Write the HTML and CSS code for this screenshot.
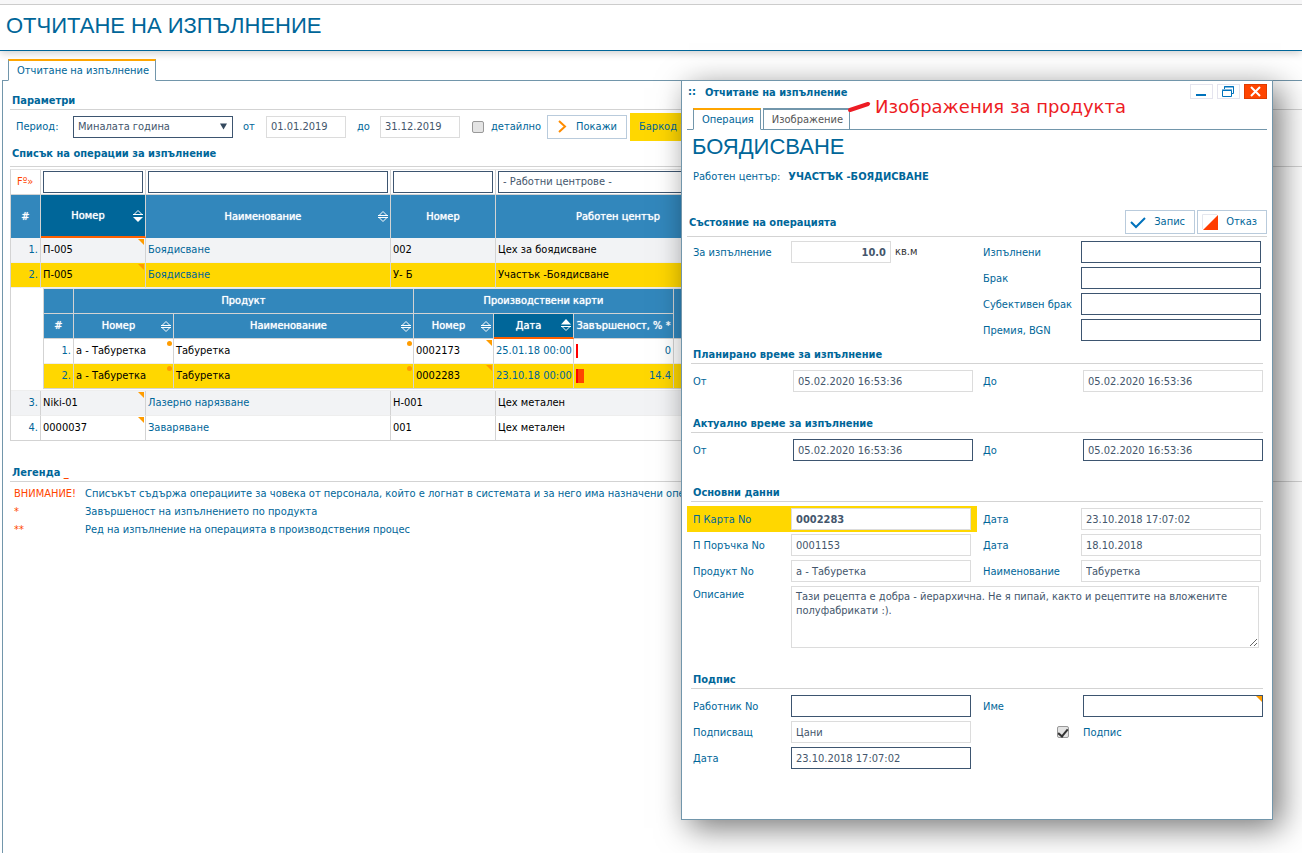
FILE: index.html
```html
<!DOCTYPE html>
<html lang="bg">
<head>
<meta charset="utf-8">
<title>Отчитане на изпълнение</title>
<link rel="stylesheet" href="styles.css">
</head>
<body>
<svg class="defs" aria-hidden="true">
  <symbol id="sort-none" viewBox="0 0 10 13"><path d="M1 5.5 5 1.5 9 5.5M0 5.5H10M0 7.5H10M1 7.5 5 11.5 9 7.5" fill="none" stroke="#fff"/></symbol>
  <symbol id="sort-down" viewBox="0 0 10 13"><path d="M1 5.5 5 1.5 9 5.5M0 5.5H10" fill="none" stroke="#fff"/><path d="M0 8H10L5 13Z" fill="#fff"/></symbol>
  <symbol id="sort-up" viewBox="0 0 10 13"><path d="M0 5.5H10L5 0Z" fill="#fff"/><path d="M0 7.5H10M1 7.5 5 11.5 9 7.5" fill="none" stroke="#fff"/></symbol>
</svg>

<header class="page-head"><h1>ОТЧИТАНЕ НА ИЗПЪЛНЕНИЕ</h1></header>

<main class="page">
  <nav class="tabs"><button class="tab active" type="button">Отчитане на изпълнение</button></nav>
  <div class="panel">
    <h2 class="section-title">Параметри</h2>
    <form class="params">
      <label class="p-label" for="period">Период:</label>
      <span class="select-wrap period-wrap">
        <select id="period" class="field"><option>Миналата година</option></select>
        <svg class="arrow" viewBox="0 0 8 6"><path d="M0 0H7L3.500 6Z" fill="#34495e"/></svg>
      </span>
      <label class="p-from" for="from">от</label>
      <input id="from" class="field ro date" value="01.01.2019" readonly>
      <label class="p-to" for="to">до</label>
      <input id="to" class="field ro date" value="31.12.2019" readonly>
      <label class="check-label"><input type="checkbox" class="check">детайлно</label>
      <button type="button" class="btn show"><svg width="9" height="13" viewBox="0 0 9 13"><path d="M1 1 7 6.500 1 12" fill="none" stroke="#ff8c00" stroke-width="2"/></svg>Покажи</button>
      <label class="barcode">Баркод на</label>
    </form>

    <h2 class="section-title list-title">Списък на операции за изпълнение</h2>
    <table class="grid">
      <colgroup><col class="c30"><col class="c105"><col class="c245"><col class="c105"><col class="c245"></colgroup>
      <thead>
        <tr class="filters">
          <td><a class="fx" href="#">Fº»</a></td>
          <td><input class="field" aria-label="Номер"></td>
          <td><input class="field" aria-label="Наименование"></td>
          <td><input class="field" aria-label="Номер на център"></td>
          <td><select class="field" aria-label="Работен център"><option>- Работни центрове -</option></select></td>
        </tr>
        <tr class="heads">
          <th>#</th>
          <th class="sorted"><div class="th"><span>Номер</span><svg class="sort"><use href="#sort-down"/></svg></div></th>
          <th><div class="th"><span>Наименование</span><svg class="sort"><use href="#sort-none"/></svg></div></th>
          <th>Номер</th>
          <th>Работен център</th>
        </tr>
      </thead>
      <tbody>
        <tr class="odd"><td class="num">1.</td><td class="tri">П-005</td><td><a href="#">Боядисване</a></td><td>002</td><td>Цех за боядисване</td></tr>
        <tr class="sel"><td class="num">2.</td><td class="tri">П-005</td><td><a href="#">Боядисване</a></td><td>У- Б</td><td>Участък -Боядисване</td></tr>
        <tr class="nest"><td colspan="5">
          <table class="grid inner">
            <colgroup><col class="c30"><col class="c100"><col class="c240"><col class="c80"><col class="c80"><col class="c100"><col class="c60"></colgroup>
            <thead>
              <tr><th></th><th colspan="2">Продукт</th><th colspan="3">Производствени карти</th><th rowspan="2">изп. **</th></tr>
              <tr><th>#</th>
                <th><div class="th"><span>Номер</span><svg class="sort"><use href="#sort-none"/></svg></div></th>
                <th><div class="th"><span>Наименование</span><svg class="sort"><use href="#sort-none"/></svg></div></th>
                <th><div class="th"><span>Номер</span><svg class="sort"><use href="#sort-none"/></svg></div></th>
                <th class="sorted"><div class="th"><span>Дата</span><svg class="sort"><use href="#sort-up"/></svg></div></th>
                <th>Завършеност, % *</th></tr>
            </thead>
            <tbody>
              <tr><td class="num">1.</td><td class="dot">а - Табуретка</td><td class="dot">Табуретка</td><td class="tri">0002173</td><td class="blue">25.01.18 00:00</td><td><div class="prog"><i class="bar"></i><span>0</span></div></td><td></td></tr>
              <tr class="sel"><td class="num">2.</td><td class="dot">а - Табуретка</td><td class="dot">Табуретка</td><td class="tri">0002283</td><td class="blue">23.10.18 00:00</td><td><div class="prog"><i class="bar part"></i><span>14.4</span></div></td><td></td></tr>
            </tbody>
          </table>
        </td></tr>
        <tr class="odd"><td class="num">3.</td><td class="tri">Niki-01</td><td><a href="#">Лазерно нарязване</a></td><td>Н-001</td><td>Цех метален</td></tr>
        <tr><td class="num">4.</td><td class="tri">0000037</td><td><a href="#">Заваряване</a></td><td>001</td><td>Цех метален</td></tr>
      </tbody>
    </table>

    <h2 class="section-title legend-title">Легенда <span class="red">_</span></h2>
    <dl class="legend">
      <dt>ВНИМАНИЕ!</dt><dd>Списъкът съдържа операциите за човека от персонала, който е логнат в системата и за него има назначени операции</dd>
      <dt>*</dt><dd>Завършеност на изпълнението по продукта</dd>
      <dt>**</dt><dd>Ред на изпълнение на операцията в производствения процес</dd>
    </dl>
  </div>
</main>

<section class="dialog" role="dialog" aria-labelledby="dlg-title">
  <header class="dlg-bar">
    <span class="grip">::</span><h2 id="dlg-title">Отчитане на изпълнение</h2>
    <button type="button" class="win" aria-label="Минимизиране"><svg width="21" height="13" viewBox="0 0 21 13"><path d="M5 10H15" stroke="#0072bc" stroke-width="2"/></svg></button>
    <button type="button" class="win" aria-label="Възстановяване"><svg width="21" height="13" viewBox="0 0 21 13"><path d="M6.500 4V1.500H15.500V8.500H14M4.500 5.500H13.500V11.500H4.500ZM6 2H16M4 5H14" fill="none" stroke="#0072bc"/></svg></button>
    <button type="button" class="win close" aria-label="Затваряне"><svg width="21" height="13" viewBox="0 0 21 13"><path d="M6 2 15 11M15 2 6 11" stroke="#fff" stroke-width="2"/></svg></button>
  </header>
  <nav class="tabs dlg-tabs">
    <button type="button" class="tab active">Операция</button>
    <button type="button" class="tab">Изображение</button>
  </nav>
  <h1 class="op-name">БОЯДИСВАНЕ</h1>
  <p class="center-row"><span>Работен център:</span><strong>УЧАСТЪК -БОЯДИСВАНЕ</strong></p>

  <div class="state-bar">
    <h3>Състояние на операцията</h3>
    <button type="button" class="btn"><svg width="17" height="13" viewBox="0 0 17 13"><path d="M1 6 6 11 15 2" fill="none" stroke="#0072bc" stroke-width="2"/></svg>Запис</button>
    <button type="button" class="btn"><svg width="17" height="16" viewBox="0 0 17 16"><path d="M.5 15V.5H15" fill="none" stroke="#e4e7ee"/><path d="M16 1V16H1Z" fill="#ff3c00"/></svg>Отказ</button>
  </div>
  <div class="form">
    <label for="todo">За изпълнение</label>
    <span class="unit"><input id="todo" class="field ro qty" value="10.0" readonly>кв.м</span>
    <label for="done">Изпълнени</label><input id="done" class="field">
    <label class="c3" for="scrap">Брак</label><input id="scrap" class="field">
    <label class="c3" for="sub">Субективен брак</label><input id="sub" class="field">
    <label class="c3" for="prem">Премия, BGN</label><input id="prem" class="field">
  </div>
  <h3 class="sub-title first">Планирано време за изпълнение</h3>
  <div class="form wide">
    <label for="pf">От</label><input id="pf" class="field ro" value="05.02.2020 16:53:36" readonly>
    <label for="pt">До</label><input id="pt" class="field ro" value="05.02.2020 16:53:36" readonly>
  </div>
  <h3 class="sub-title">Актуално време за изпълнение</h3>
  <div class="form wide">
    <label for="af">От</label><input id="af" class="field" value="05.02.2020 16:53:36">
    <label for="at">До</label><input id="at" class="field" value="05.02.2020 16:53:36">
  </div>
  <h3 class="sub-title">Основни данни</h3>
  <div class="form main-data">
    <div class="card-row"><label for="card">П Карта No</label><input id="card" class="field ro strong" value="0002283" readonly></div>
    <label for="cd">Дата</label><input id="cd" class="field ro" value="23.10.2018 17:07:02" readonly>
    <label for="ord">П Поръчка No</label><input id="ord" class="field ro" value="0001153" readonly>
    <label for="od">Дата</label><input id="od" class="field ro" value="18.10.2018" readonly>
    <label for="prod">Продукт No</label><input id="prod" class="field ro" value="а - Табуретка" readonly>
    <label for="pn">Наименование</label><input id="pn" class="field ro" value="Табуретка" readonly>
    <label class="top" for="desc">Описание</label><textarea id="desc" class="field ro desc" readonly>Тази рецепта е добра - йерархична. Не я пипай, както и рецептите на вложените полуфабрикати :).</textarea>
  </div>
  <h3 class="sub-title">Подпис</h3>
  <div class="form sign">
    <label for="wn">Работник No</label><input id="wn" class="field">
    <label for="name">Име</label><span class="tri"><input id="name" class="field"></span>
    <label for="signer">Подписващ</label><input id="signer" class="field ro" value="Цани" readonly>
    <input id="signed" class="check right" type="checkbox" checked><label for="signed">Подпис</label>
    <label for="sd">Дата</label><input id="sd" class="field" value="23.10.2018 17:07:02">
  </div>
  <p class="note"><svg width="24" height="12" viewBox="0 0 24 12"><path d="M3 9 21 3" stroke="#ed1c24" stroke-width="4" stroke-linecap="round"/></svg>Изображения за продукта</p>
</section>
</body>
</html>
```

FILE: styles.css
```css
* { box-sizing: border-box; }
body {
  margin: 0;
  min-height: 100vh;
  display: flex;
  flex-direction: column;
  position: relative;
  overflow: hidden;
  background: #fff;
  color: #069;
  font: 11px/14px Tahoma, "DejaVu Sans Condensed", "Noto Sans", sans-serif;
}
h1, h2, h3, p, dl, dd { margin: 0; }
h2, h3 { font-size: 11px; line-height: 14px; }
button, input, select, textarea { font: inherit; margin: 0; }
a { color: #069; text-decoration: none; }
svg { flex: none; }
.defs { display: none; }

.page-head {
  border-top: 4px solid #f7f7f8;
  border-bottom: 1px solid #069;
  box-shadow: 0 2px 8px #0003;
}
.page-head h1 {
  border-top: 1px solid #ccc;
  padding: 7px 6px 10px;
}
.page-head h1, .op-name {
  font: 22px/28px "Liberation Sans", Arial, sans-serif;
}
.page { flex: 1; display: flex; flex-direction: column; padding: 8px 0 0 2px; }

.tabs { display: flex; gap: 2px; padding-left: 6px; }
.tab {
  height: 22px;
  padding: 0 6px 0 8px;
  background: #fff;
  color: #555;
  border: 1px solid #7296ab;
  border-top-width: 2px;
}
.tab.active { color: #069; border-top-color: #ffa500; border-bottom-color: #fff; }
.page > .tabs, .dlg-tabs { margin-bottom: -1px; position: relative; }
.panel {
  flex: 1;
  border: solid #7296ab;
  border-width: 1px 0 0 1px;
  padding: 13px 0 0 7px;
}
.section-title { border-bottom: 1px solid #d3d3d3; padding: 0 2px 1px; }

.field {
  display: block;
  width: 100%;
  height: 22px;
  padding: 0 4px;
  border: 1px solid #3d5570;
  border-radius: 0;
  background: #fff;
  color: #44566c;
  appearance: none;
  outline: 0;
}
.ro { border-color: #dcdcdc; }
.strong, .qty { font-weight: bold; }

.params { display: flex; align-items: center; height: 33px; padding-left: 6px; white-space: nowrap; }
.p-label { width: 57px; }
.select-wrap { position: relative; }
.period-wrap { width: 160px; }
.arrow { position: absolute; right: 5px; top: 7px; width: 8px; height: 7px; }
.p-from { width: 33px; padding-left: 10px; }
.p-to { width: 34px; padding-left: 11px; }
.date { width: 80px; }
.check-label { display: flex; align-items: center; gap: 7px; width: 87px; padding-left: 12px; }
.check {
  width: 12px;
  height: 12px;
  border: 1px solid #999;
  border-radius: 2px;
  background: #e4e4e4;
  appearance: none;
  display: grid;
  place-items: center;
}
.check:checked::after {
  content: "";
  width: 4px;
  height: 8px;
  border: solid #333;
  border-width: 0 2px 2px 0;
  transform: rotate(40deg);
}
.btn {
  display: flex;
  align-items: center;
  justify-content: space-between;
  height: 24px;
  padding: 0 9px 0 4px;
  border: 1px solid #b9cbdc;
  background: #fff;
  color: #069;
}
.show { width: 80px; padding-left: 10px; }
.barcode { margin-left: 3px; padding: 7px 9px; background: #ffd700; }
.list-title { padding: 4px 2px 5px; margin-bottom: 2px; }

.grid {
  table-layout: fixed;
  border-collapse: separate;
  border-spacing: 0;
  width: 731px;
  border-left: 1px solid #d3d3d3;
  border-top: 1px solid #e4e4e4;
  color: #000;
}
.c30 { width: 30px; }
.c60 { width: 60px; }
.c80 { width: 80px; }
.c100 { width: 100px; }
.c105 { width: 105px; }
.c240 { width: 240px; }
.c245 { width: 245px; }
.grid td, .grid th { padding: 0 2px; border-right: 1px solid #d3d3d3; border-bottom: 1px solid #eee; white-space: nowrap; }
.grid td { height: 25px; }
.grid th { background: #3287bc; color: #fff; font-weight: normal; text-shadow: 0 0 1px #fff; border-bottom-color: #d3d3d3; }
.grid .filters td { border-bottom-color: #d3d3d3; }
.filters .fx { color: #ff4500; padding-left: 4px; }
.heads th { height: 43px; border-bottom: 0; }
.grid th.sorted { background: #069; border-bottom: 2px solid #ff6000; }
.th { display: flex; align-items: center; }
.th span { flex: 1; }
.sort { width: 10px; height: 13px; }
.odd { background: #f2f3f5; }
.sel { background: #ffd700; }
.grid td.num { text-align: right; color: #069; }
.grid td.blue { color: #069; }
.tri, .dot { position: relative; }
.tri::after {
  content: "";
  position: absolute;
  top: 1px;
  right: 1px;
  border: 3px solid;
  border-color: #ff9c00 #ff9c00 transparent transparent;
}
.dot::after { content: ""; position: absolute; top: 2px; right: 1px; width: 5px; height: 5px; border-radius: 50%; background: #ff9c00; }
.grid tr.nest > td { padding: 0 0 1px 32px; }
.grid.inner { width: 691px; }
.inner thead th { height: 25px; }
.inner th, .inner td { overflow: hidden; }
.prog { display: flex; justify-content: space-between; align-items: center; color: #069; }
.bar { width: 2px; height: 14px; background: #f00; }
.bar.part { width: 8px; background: linear-gradient(90deg, #f00 2px, #ff4500 2px); }
.grid tbody > tr:last-child > td { border-bottom-color: #d3d3d3; }

.legend-title { margin-top: 25px; }
.section-title .red { color: #ff4500; }
.legend { display: grid; grid-template-columns: 71px 1fr; row-gap: 4px; padding: 5px 4px 0; white-space: nowrap; overflow: hidden; }
.legend dt { color: #ff4500; }

.dialog {
  position: absolute;
  top: 80px;
  right: 29px;
  width: 592px;
  padding: 2px 5px 50px;
  border: 1px solid #7296ab;
  background: #fff;
  box-shadow: 8px 8px 30px #0008;
}
.dlg-bar { display: flex; align-items: center; gap: 4px; height: 16px; }
.dlg-bar h2 { flex: 1; padding: 4px 0 0 5px; }
.grip { padding: 2px 0 0 1px; font-weight: bold; }
.win { width: 23px; height: 15px; padding: 0; border: 1px solid #e4e4ee; background: #fff; }
.win svg { display: block; }
.close { background: #ff4500; border-color: #e03c00; }
.dlg-tabs { margin: 9px 0 0; border-bottom: 1px solid #7296ab; }
.dlg-tabs .tab { margin-bottom: -1px; }
.op-name { padding: 3px 5px 0; }
.center-row { display: flex; gap: 8px; padding: 9px 6px 0; }
.state-bar { display: flex; align-items: center; gap: 2px; margin-top: 26px; padding-bottom: 2px; border-bottom: 1px solid #d3d3d3; }
.state-bar h3 { flex: 1; padding: 2px 2px 0; }
.state-bar .btn { width: 70px; }
.form {
  display: grid;
  grid-template-columns: 98px 192px 98px 180px;
  row-gap: 4px;
  align-items: center;
  padding: 4px 6px 0;
}
.form label { padding-top: 2px; }
.form .field { max-width: 180px; }
.form.wide { grid-template-columns: 100px 190px 100px 180px; padding-top: 6px; }
.c3 { grid-column: 3; }
.unit { display: flex; align-items: center; gap: 4px; color: #333; }
.qty { width: 100px; text-align: right; }
.sub-title { margin: 24px 4px 0; padding: 1px 2px 1px; border-bottom: 1px solid #d3d3d3; }
.sub-title.first { margin-top: 6px; }
.card-row {
  grid-column: 1 / 3;
  display: grid;
  grid-template-columns: 104px 180px;
  align-items: center;
  background: #ffd700;
  margin: -2px 6px -2px -6px;
  padding: 2px 0;
}
.card-row label { padding-left: 6px; }
.main-data { padding-top: 6px; }
.form .desc { grid-column: 2 / 5; max-width: 468px; height: 62px; padding: 3px 4px; resize: both; }
.top { align-self: start; }
.form.sign { grid-template-columns: 98px 192px 100px 180px; padding-top: 6px; }
.right { justify-self: end; margin-right: 14px; }
.note {
  position: absolute;
  left: 165px;
  top: 14px;
  display: flex;
  align-items: center;
  gap: 4px;
  color: #ed1c24;
  font: 18px/24px "DejaVu Sans", sans-serif;
  white-space: nowrap;
}
```
